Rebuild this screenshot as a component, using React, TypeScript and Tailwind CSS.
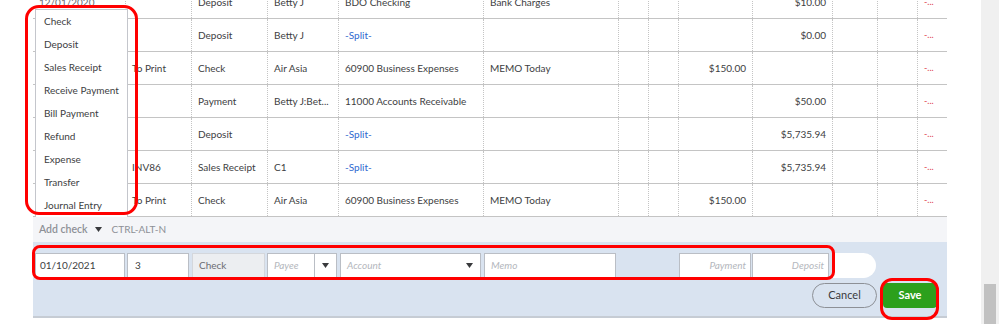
import React from 'react';

type Row = {
  date?: string;
  refNo?: string;
  type: string;
  payee?: string;
  account?: string;
  split?: boolean;
  memo?: string;
  payment?: string;
  deposit?: string;
};

const rows: Row[] = [
  { date: '12/01/2020', type: 'Deposit', payee: 'Betty J', account: 'BDO Checking', memo: 'Bank Charges', deposit: '$10.00' },
  { type: 'Deposit', payee: 'Betty J', account: '-Split-', split: true, deposit: '$0.00' },
  { refNo: 'To Print', type: 'Check', payee: 'Air Asia', account: '60900 Business Expenses', memo: 'MEMO Today', payment: '$150.00' },
  { type: 'Payment', payee: 'Betty J:Bet...', account: '11000 Accounts Receivable', deposit: '$50.00' },
  { type: 'Deposit', account: '-Split-', split: true, deposit: '$5,735.94' },
  { refNo: 'INV86', type: 'Sales Receipt', payee: 'C1', account: '-Split-', split: true, deposit: '$5,735.94' },
  { refNo: 'To Print', type: 'Check', payee: 'Air Asia', account: '60900 Business Expenses', memo: 'MEMO Today', payment: '$150.00' },
];

const menuItems = ['Check', 'Deposit', 'Sales Receipt', 'Receive Payment', 'Bill Payment', 'Refund', 'Expense', 'Transfer', 'Journal Entry'];

const cols = 'grid grid-cols-[93px_66px_76px_71px_145px_135px_30px_30px_74px_80px_45px_40px_29px]';
const cell = 'border-r border-dotted border-[#c4c4c4] px-[6px] truncate';

const Caret = ({ className = '' }: { className?: string }) => (
  <svg width="7" height="5" viewBox="0 0 7 5" className={className}>
    <path d="M0 0h7L3.5 5z" fill="currentColor" />
  </svg>
);

const App = () => {
  return (
    <div className="relative h-[324px] w-[999px] overflow-hidden bg-white text-[10px] text-[#3d3e42]" style={{ fontFamily: 'Lato, "Open Sans", sans-serif' }}>
      <div className="flex h-full">
        <div className="w-[33px] shrink-0" />

        <div className="w-[914px] shrink-0 flex flex-col">
          {/* Register rows */}
          <div className="-mt-[14px]">
            {rows.map((r, i) => (
              <div key={i} className={`${cols} h-[33px] items-center border-b border-[#c4c4c4]`}>
                <div className={`${cell} h-full flex items-center text-[#6b6c72]`}>{r.date}</div>
                <div className={`${cell} h-full flex items-center`}>{r.refNo}</div>
                <div className={`${cell} h-full flex items-center`}>{r.type}</div>
                <div className={`${cell} h-full flex items-center`}>{r.payee}</div>
                <div className={`${cell} h-full flex items-center ${r.split ? 'text-[#2f6ad0]' : ''}`}>{r.account}</div>
                <div className={`${cell} h-full flex items-center`}>{r.memo}</div>
                <div className={`${cell} h-full`} />
                <div className={`${cell} h-full`} />
                <div className={`${cell} h-full flex items-center justify-end`}>{r.payment}</div>
                <div className={`${cell} h-full flex items-center justify-end`}>{r.deposit}</div>
                <div className={`${cell} h-full`} />
                <div className={`${cell} h-full`} />
                <div className="h-full flex items-center px-[6px] text-[#e0454f] text-[9px]">-...</div>
              </div>
            ))}
          </div>

          {/* Add check bar */}
          <div className="h-[25px] bg-[#f4f5f8] flex items-center pl-[6px] text-[#8d9096]">
            <span className="font-semibold text-[10.5px]">Add check</span>
            <Caret className="ml-[7px] text-[#393a3d]" />
            <span className="ml-[10px]">CTRL-ALT-N</span>
          </div>

          {/* Edit row */}
          <div className="bg-[#d9e3f0] border-b-2 border-[#c6ccd4] pt-[11px] pb-[8px] flex flex-col">
            <div className="flex h-[25px]">
              <div className="ml-[2px] w-[90px] bg-white border border-[#babec5] flex items-center px-[4px]">01/10/2021</div>
              <div className="ml-[2px] w-[62px] bg-white border border-[#babec5] flex items-center px-[7px]">3</div>
              <div className="ml-[3px] w-[73px] bg-[#eceef1] border border-[#d4d7dc] flex items-center px-[6px] text-[#6b6c72]">Check</div>
              <div className="ml-[2px] w-[70px] bg-white border border-[#babec5] flex">
                <div className="flex-1 flex items-center px-[6px] italic text-[#b4b7bd]">Payee</div>
                <div className="w-[22px] border-l border-[#babec5] flex items-center justify-center">
                  <Caret className="text-[#393a3d]" />
                </div>
              </div>
              <div className="ml-[3px] w-[141px] bg-white border border-[#babec5] flex items-center justify-between px-[6px] italic text-[#b4b7bd]">
                <span>Account</span>
                <Caret className="text-[#393a3d] mr-[1px]" />
              </div>
              <div className="ml-[3px] w-[132px] bg-white border border-[#babec5] flex items-center px-[6px] italic text-[#b4b7bd]">Memo</div>
              <div className="ml-[63px] w-[72px] bg-white border border-[#babec5] flex items-center justify-end px-[4px] italic text-[#b4b7bd]">Payment</div>
              <div className="ml-[1px] w-[77px] bg-white border border-[#babec5] flex items-center justify-end px-[4px] italic text-[#b4b7bd]">Deposit</div>
              <div className="ml-[4px] w-[43px] bg-white rounded-r-full" />
            </div>
            <div className="flex justify-end gap-[6px] pr-[10px] mt-[5px]">
              <button className="h-[25px] w-[65px] rounded-full border border-[#8d9096] bg-[#d9e3f0] text-[11px] text-[#393a3d]">Cancel</button>
              <button className="h-[25px] w-[54px] rounded-[4px] bg-[#2ca01c] text-[11px] font-bold text-white">Save</button>
            </div>
          </div>
        </div>

        <div className="w-[34px] shrink-0" />

        {/* Scrollbar */}
        <div className="w-[18px] shrink-0 bg-[#f0f0f0] flex flex-col justify-end items-center">
          <div className="w-[12px] h-[40px] bg-[#c1c1c1]" />
        </div>
      </div>

      {/* Transaction type dropdown */}
      <div className="absolute left-[35px] top-[9px] w-[93px] h-[208px] bg-white border border-b-0 border-[#c4c6cc]">
        {menuItems.map((m) => (
          <div key={m} className="h-[23px] leading-[23px] pl-[8px]">{m}</div>
        ))}
      </div>

      {/* Red annotations */}
      <div className="absolute left-[25px] top-[5px] w-[113px] h-[210px] border-[3px] border-[#ff0000] rounded-[14px]" />
      <div className="absolute left-[32px] top-[245px] w-[803px] h-[35px] border-[3px] border-[#ff0000] rounded-[8px]" />
      <div className="absolute left-[880px] top-[278px] w-[59px] h-[42px] border-[3px] border-[#ff0000] rounded-[12px]" />
    </div>
  );
};

export default App;
